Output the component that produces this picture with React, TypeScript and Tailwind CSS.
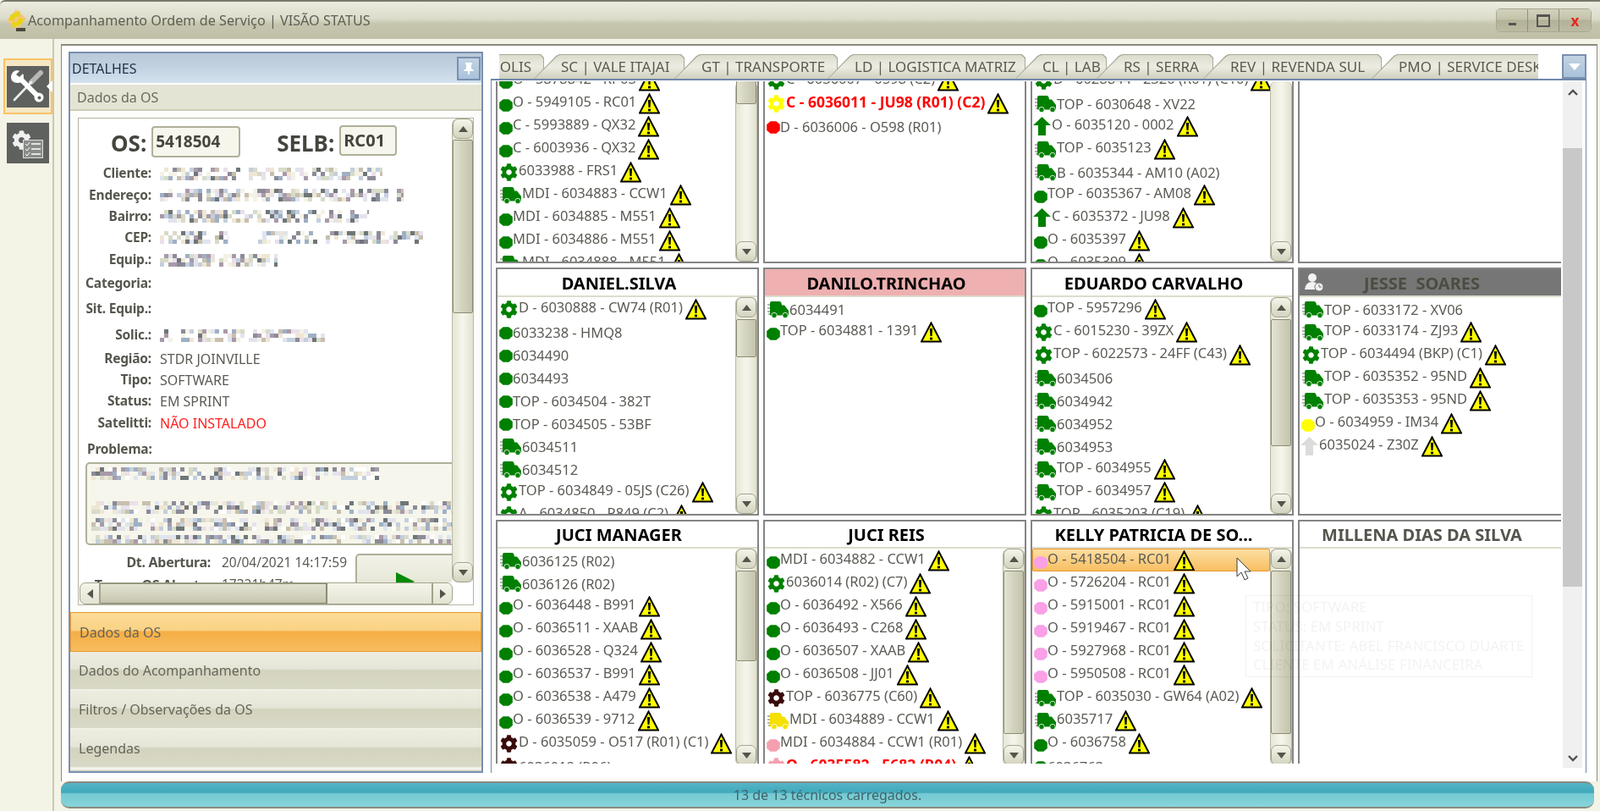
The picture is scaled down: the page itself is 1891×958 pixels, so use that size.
import React from "react";
import { FaCog } from "react-icons/fa";

type Kind = "c" | "g" | "t" | "a";
type Row = { k: Kind; col: string; text: string; w?: boolean; red?: boolean; sel?: boolean };

const G = "#008000";
const DK = "#3a0a0a";
const PK = "#f9a0e6";
const r = (k: Kind, text: string, w = false, col = G, red = false, sel = false): Row => ({ k, col, text, w, red, sel });

function Warn() {
  return (
    <svg width="25" height="25" viewBox="0 0 25 25" className="shrink-0 ml-[3px] mt-[2px]">
      <path d="M12.5 1.5 L24 23.6 L1 23.6 Z" fill="#ffff00" stroke="#000" strokeWidth="2" strokeLinejoin="miter" />
      <path d="M10.9 8 h3.2 l-.6 9 h-2 Z" fill="#000" />
      <rect x="11" y="18.6" width="3" height="2.8" fill="#000" />
    </svg>
  );
}

function Circle({ col }: { col: string }) {
  return (
    <svg width="16" height="15" viewBox="0 0 16 15" className="block">
      <path d="M4.6 0.3 H11.4 L15.8 4 V11 L11.4 14.7 H4.6 L0.2 11 V4 Z" fill={col} />
    </svg>
  );
}

function Truck({ col }: { col: string }) {
  return (
    <svg width="26" height="20" viewBox="0 0 26 20" className="block">
      <path d="M0 4 h4 M0 8 h3 M0 12 h4 M1 15 h3" stroke="#9a9a9a" strokeWidth="1.6" />
      <path d="M3 2 Q3 0 5 0 H14 Q16 0 16.5 2 L17 4.5 H20 L25 11 V16.5 H3 Z" fill={col} />
      <circle cx="8" cy="16.5" r="3.2" fill={col} stroke="#fff" strokeWidth="0.8" />
      <circle cx="21" cy="16.5" r="3.2" fill={col} stroke="#fff" strokeWidth="0.8" />
    </svg>
  );
}

function Arrow({ col }: { col: string }) {
  return (
    <svg width="21" height="22" viewBox="0 0 21 22" className="block">
      <path d="M10.5 0 L21 10 H15 V22 H6 V10 H0 Z" fill={col} />
    </svg>
  );
}

function StatusIcon({ k, col, w }: { k: Kind; col: string; w?: boolean }) {
  if (k === "c")
    return (
      <span className={w ? "shrink-0 w-[16px] ml-[2px] mt-[9px]" : "shrink-0 w-[16px] ml-[2px] mt-[8px]"}>
        <Circle col={col} />
      </span>
    );
  if (k === "g")
    return (
      <span className="shrink-0 w-[22px] ml-[3px] mt-[4px]">
        <FaCog size={21} color={col} />
      </span>
    );
  if (k === "t")
    return (
      <span className="shrink-0 w-[26px] ml-[3px] mt-[5px]">
        <Truck col={col} />
      </span>
    );
  return (
    <span className="shrink-0 w-[22px] ml-[1px] mt-[3px]">
      <Arrow col={col} />
    </span>
  );
}

function ListRow({ row }: { row: Row }) {
  return (
    <div
      className={
        row.sel
          ? "relative flex h-[27px] shrink-0 whitespace-nowrap rounded-[2px] bg-gradient-to-b from-[#fde0a4] to-[#f7bd5e] outline outline-1 outline-[#e8982e] -outline-offset-1"
          : "flex h-[27px] shrink-0 whitespace-nowrap"
      }
    >
      <StatusIcon k={row.k} col={row.col} w={row.w} />
      <span
        className={
          (row.w ? "mt-[3px] " : "mt-[6px] ") +
          (row.red
            ? "text-[17.5px] leading-[18px] font-bold text-[#ff0000]"
            : "text-[16.5px] leading-[18px] text-[#5b5b55]")
        }
      >
        {row.text}
      </span>
      {row.w ? <Warn /> : null}
    </div>
  );
}

function Tri({ down = false }: { down?: boolean }) {
  return (
    <svg width="11" height="7" viewBox="0 0 11 7">
      <path d={down ? "M0 0 H11 L5.5 7 Z" : "M0 7 H11 L5.5 0 Z"} fill="#55554a" />
    </svg>
  );
}

function VBtn({ down = false }: { down?: boolean }) {
  return (
    <div className="flex h-[24px] shrink-0 items-center justify-center rounded-[7px] border border-[#a3a38c] bg-gradient-to-b from-[#f4f4ea] to-[#d4d4c0]">
      <Tri down={down} />
    </div>
  );
}

function VScroll({ top, height, noTop }: { top: number; height: number; noTop?: boolean }) {
  return (
    <div className="flex w-[26px] shrink-0 flex-col rounded-[7px] bg-gradient-to-r from-[#e6e6d6] via-[#f6f6ec] to-[#e2e2d0] border-x border-[#b8b8a2]">
      {noTop ? null : <VBtn />}
      <div className="flex-1 overflow-hidden">
        {height > 0 ? (
          <div
            className="rounded-[2px] border border-[#8c8c74] bg-gradient-to-r from-[#e4e4d4] via-[#d2d2be] to-[#c4c4ae]"
            style={{ marginTop: top, height }}
          />
        ) : null}
      </div>
      <VBtn down />
    </div>
  );
}

type CardProps = {
  title?: string;
  rows: Row[];
  scroll?: { top: number; height: number; noTop?: boolean };
  hh?: number;
  headBg?: string;
  headText?: string;
  offset?: number;
  last?: boolean;
  user?: boolean;
};

function Card({ title, rows, scroll, hh = 33, headBg = "#ffffff", headText = "#000000", offset = 0, last, user }: CardProps) {
  return (
    <div
      className={
        "flex min-h-0 flex-col overflow-hidden border-b-2 border-l-2 border-[#858585] bg-white " +
        (title ? "border-t-2 " : "") +
        (last ? "" : "border-r-2")
      }
    >
      {title ? (
        <div
          className="relative flex shrink-0 items-center justify-center whitespace-pre border-b-2 border-[#dcdccc] pr-[20px] pt-[2px] text-[20px] font-bold"
          style={{ height: hh, background: headBg, color: headText }}
        >
          {user ? (
            <svg width="24" height="24" viewBox="0 0 24 24" className="absolute left-[5px] top-[3px]">
              <circle cx="10" cy="7" r="5" fill="#f2f2f2" />
              <path d="M1 21 Q2 12 10 12 Q14 12 15 14 L13 21 Z" fill="#f2f2f2" />
              <circle cx="18" cy="18" r="5" fill="#f2f2f2" stroke="#767676" />
              <path d="M18 15 V18 H21" stroke="#767676" fill="none" />
            </svg>
          ) : null}
          {title}
        </div>
      ) : null}
      <div className="flex min-h-0 flex-1">
        <div className="min-w-0 flex-1 overflow-hidden">
          <div className="flex flex-col" style={{ marginTop: offset }}>
            {rows.map((x, i) => (
              <ListRow key={i} row={x} />
            ))}
          </div>
        </div>
        {scroll ? <VScroll {...scroll} /> : null}
      </div>
    </div>
  );
}

function rand(seed: number) {
  let s = seed;
  return () => {
    s = (s * 16807) % 2147483647;
    return s / 2147483647;
  };
}
const PAL = ["#dfe5ee", "#c4cfdd", "#9fb0c4", "#efe6d4", "#8b8b98", "#c8bfae", "#f3f2e6", "#a99aa8", "#6f7678", "#e8e0ea", "#ffffff", "#d7dbc8"];

function Mosaic({ w, h, seed }: { w: number; h: number; seed: number }) {
  const rn = rand(seed);
  const cells: React.ReactNode[] = [];
  const cw = 5;
  const ch = 5;
  for (let y = 0; y < h; y += ch) {
    for (let x = 0; x < w; x += cw) {
      if (rn() < 0.28) continue;
      const c = PAL[Math.floor(rn() * PAL.length)];
      cells.push(<rect key={x + "-" + y} x={x} y={y} width={cw} height={ch} fill={c} />);
    }
  }
  return (
    <svg width={w} height={h} viewBox={`0 0 ${w} ${h}`} className="block shrink-0">
      {cells}
    </svg>
  );
}

function Field({ label, h, children }: { label: string; h: string; children?: React.ReactNode }) {
  return (
    <div className={"flex items-center " + h}>
      <span className="w-[86px] shrink-0 text-right text-[15.5px] font-bold tracking-[-0.2px] text-[#56564e]">{label}</span>
      <div className="ml-[10px] flex items-center text-[16px] text-[#5b5b55]">{children}</div>
    </div>
  );
}

function Acc({ text, active }: { text: string; active?: boolean }) {
  return (
    <div
      className={
        active
          ? "flex h-[47px] items-center border border-[#e8982e] bg-[linear-gradient(#fcdc97_0%,#f9d285_45%,#f5ae45_50%,#f7bd5f_100%)] pl-[10px] text-[16px] text-[#66635a]"
          : "flex h-[46px] items-center border-b-2 border-[#f0f0e4] bg-[linear-gradient(#ecece0_0%,#e6e6d8_45%,#d3d3be_50%,#d9d9c7_100%)] pl-[10px] text-[16px] text-[#66665c]"
      }
    >
      {text}
    </div>
  );
}

function Tab({ text, w, first }: { text: string; w: number; first?: boolean }) {
  return (
    <div
      className={(first ? "-ml-[60px] " : "-ml-[12px] ") + "relative h-[29px] shrink-0 bg-[#a9a999] [clip-path:polygon(0_100%,26px_2px,30px_0,calc(100%-4px)_0,100%_4px,100%_100%)]"}
      style={{ width: w }}
    >
      <div
        className={
          (first ? "justify-end pr-[14px] " : "pl-[31px] ") +
          "absolute inset-x-[1px] bottom-0 top-[1px] flex items-center bg-[linear-gradient(#dcdccc,#ecece2_50%,#cfcfbf)] text-[17px] text-[#5a5a50] [clip-path:polygon(0_100%,26px_2px,30px_0,calc(100%-4px)_0,100%_4px,100%_100%)] whitespace-nowrap"
        }
      >
        {text}
      </div>
    </div>
  );
}

const col1a = [
  r("c", "O - 5878842 - RP03", true),
  r("c", "O - 5949105 - RC01", true),
  r("c", "C - 5993889 - QX32", true),
  r("c", "C - 6003936 - QX32", true),
  r("g", "6033988 - FRS1", true),
  r("t", "MDI - 6034883 - CCW1", true),
  r("c", "MDI - 6034885 - M551", true),
  r("c", "MDI - 6034886 - M551", true),
  r("t", "MDI - 6034888 - M551", true),
];
const col2a = [
  r("g", "C - 6036007 - 0598 (C2)", true),
  r("g", "C - 6036011 - JU98 (R01) (C2)", true, "#ffff00", true),
  r("c", "D - 6036006 - O598 (R01)", false, "#ff0000"),
];
const col3a = [
  r("g", "D - 6028844 - 2320 (R01) (C10)", true),
  r("t", "TOP - 6030648 - XV22"),
  r("a", "O - 6035120 - 0002", true),
  r("t", "TOP - 6035123", true),
  r("t", "B - 6035344 - AM10 (A02)"),
  r("c", "TOP - 6035367 - AM08", true),
  r("a", "C - 6035372 - JU98", true),
  r("c", "O - 6035397", true),
  r("c", "O - 6035399", true),
];
const daniel = [
  r("g", "D - 6030888 - CW74 (R01)", true),
  r("c", "6033238 - HMQ8"),
  r("c", "6034490"),
  r("c", "6034493"),
  r("c", "TOP - 6034504 - 382T"),
  r("c", "TOP - 6034505 - 53BF"),
  r("t", "6034511"),
  r("t", "6034512"),
  r("g", "TOP - 6034849 - 05JS (C26)", true),
  r("g", "A - 6034850 - R849 (C2)", true),
];
const danilo = [r("t", "6034491"), r("c", "TOP - 6034881 - 1391", true)];
const eduardo = [
  r("c", "TOP - 5957296", true),
  r("g", "C - 6015230 - 39ZX", true),
  r("g", "TOP - 6022573 - 24FF (C43)", true),
  r("t", "6034506"),
  r("t", "6034942"),
  r("t", "6034952"),
  r("t", "6034953"),
  r("t", "TOP - 6034955", true),
  r("t", "TOP - 6034957", true),
  r("g", "TOP - 6035203 (C19)", true),
];
const jesse = [
  r("t", "TOP - 6033172 - XV06"),
  r("t", "TOP - 6033174 - ZJ93", true),
  r("g", "TOP - 6034494 (BKP) (C1)", true),
  r("t", "TOP - 6035352 - 95ND", true),
  r("t", "TOP - 6035353 - 95ND", true),
  r("c", "O - 6034959 - IM34", true, "#ffff00"),
  r("a", "6035024 - Z30Z", true, "#dcdcdc"),
];
const juciM = [
  r("t", "6036125 (R02)"),
  r("t", "6036126 (R02)"),
  r("c", "O - 6036448 - B991", true),
  r("c", "O - 6036511 - XAAB", true),
  r("c", "O - 6036528 - Q324", true),
  r("c", "O - 6036537 - B991", true),
  r("c", "O - 6036538 - A479", true),
  r("c", "O - 6036539 - 9712", true),
  r("g", "D - 6035059 - O517 (R01) (C1)", true, DK),
  r("g", "6036012 (R06)", false, DK),
];
const juciR = [
  r("c", "MDI - 6034882 - CCW1", true),
  r("g", "6036014 (R02) (C7)", true),
  r("c", "O - 6036492 - X566", true),
  r("c", "O - 6036493 - C268", true),
  r("c", "O - 6036507 - XAAB", true),
  r("c", "O - 6036508 - JJ01", true),
  r("g", "TOP - 6036775 (C60)", true, DK),
  r("t", "MDI - 6034889 - CCW1", true, "#f5e000"),
  r("c", "MDI - 6034884 - CCW1 (R01)", true, "#f5a0b0"),
  r("g", "O - 6035582 - 5682 (R04)", true, "#f5a0b0", true),
];
const kelly = [
  r("c", "O - 5418504 - RC01", true, PK, false, true),
  r("c", "O - 5726204 - RC01", true, PK),
  r("c", "O - 5915001 - RC01", true, PK),
  r("c", "O - 5919467 - RC01", true, PK),
  r("c", "O - 5927968 - RC01", true, PK),
  r("c", "O - 5950508 - RC01", true, PK),
  r("t", "TOP - 6035030 - GW64 (A02)", true),
  r("t", "6035717", true),
  r("c", "O - 6036758", true),
  r("c", "6036763"),
];

function Logo() {
  return (
    <svg width="24" height="27" viewBox="0 0 24 27" className="shrink-0">
      <path d="M12 0 L24 11 L14 23 L1 14 Z" fill="#f6c67a" />
      <path d="M3.5 13 Q3.5 5 12 4 L16.5 1.5 L16.5 9.5 L13 8.5 Q9.5 8.5 9.5 13 Z" fill="#e6d414" />
      <path d="M20.5 11 Q20.5 19 12 20 L7.5 22.5 L7.5 14.5 L11 15.5 Q14.5 15.5 14.5 11 Z" fill="#e6d414" />
      <rect x="12" y="22" width="11" height="4" fill="#4a4a38" />
    </svg>
  );
}

function ToolIcon() {
  return (
    <svg width="50" height="49" viewBox="0 0 50 49" className="block bg-[#5f615f]">
      <path d="M40 8 L29 19" stroke="#b8b8b4" strokeWidth="6" strokeLinecap="round" />
      <path d="M29 19 L9 40" stroke="#eeeeee" strokeWidth="2.6" strokeLinecap="round" />
      <path d="M15 14 L36 35" stroke="#ffffff" strokeWidth="6" />
      <circle cx="38" cy="37" r="5.5" fill="#ffffff" />
      <circle cx="38.5" cy="37.5" r="2" fill="#5f615f" />
      <path d="M13 5 Q6 5 5 13 Q5 20 13 20 Q20 20 20 13 Q20 10 19 9 L15 13 L11 10 L15 6 Z" fill="#ffffff" />
    </svg>
  );
}

function SettingsIcon() {
  return (
    <div className="relative h-[48px] w-[50px] bg-[#5f615f]">
      <span className="absolute left-[6px] top-[9px]">
        <FaCog size={23} color="#f0f0f0" />
      </span>
      <svg width="24" height="22" viewBox="0 0 24 22" className="absolute left-[19px] top-[20px]">
        <rect x="0.5" y="0.5" width="23" height="21" fill="#8a8c88" stroke="#dddddd" />
        <path d="M3 5 l2 2 l3 -4 M3 11 l2 2 l3 -4 M3 17 l2 2 l3 -4" stroke="#fff" fill="none" />
        <path d="M10 5 H21 M10 11 H21 M10 17 H21" stroke="#fff" strokeWidth="1.6" />
      </svg>
    </div>
  );
}

function WinBtn({ children, last }: { children: React.ReactNode; last?: boolean }) {
  return (
    <div className={"flex h-full w-[37px] items-center justify-center bg-[linear-gradient(#d2d1bb,#c4c3aa_45%,#b3b298_50%,#bcbba2)] " + (last ? "" : "border-r border-[#8e8d76]")}>
      {children}
    </div>
  );
}

export default function App() {
  return (
    <div className="relative flex h-[958px] w-[1891px] flex-col overflow-hidden bg-[#f3f3e6] font-['Liberation_Sans',sans-serif] blur-[0.4px]">
      {/* title bar */}
      <div className="flex h-[46px] shrink-0 items-center rounded-tl-[6px] border-t-2 border-[#77776a] bg-[linear-gradient(#ecece0,#dcdccb_45%,#c6c5ad_60%,#bfbea6)] pl-[7px] pr-[10px]">
        <Logo />
        <span className="ml-[2px] text-[16.2px] text-[#5e5e55]">Acompanhamento Ordem de Serviço | VISÃO STATUS</span>
        <div className="ml-auto flex h-[28px] overflow-hidden rounded-[5px] border border-[#a8a790]">
          <WinBtn>
            <span className="mt-[9px] h-[3px] w-[9px] bg-[#555]" />
          </WinBtn>
          <WinBtn>
            <span className="h-[15px] w-[16px] border-2 border-t-[3px] border-[#555]" />
          </WinBtn>
          <WinBtn last>
            <span className="text-[17px] font-bold leading-none text-[#e8241a]">x</span>
          </WinBtn>
        </div>
      </div>

      <div className="flex min-h-0 flex-1">
        {/* ribbon */}
        <div className="flex w-[64px] shrink-0 flex-col items-start border-r-2 border-[#c9c9b4] pl-[4px] pt-[23px]">
          <div className="relative flex h-[66px] w-[58px] items-center justify-start border-2 border-[#fbc266] bg-[#f6e7c4] pl-[2px]">
            <ToolIcon />
            <span className="absolute -right-[2px] top-[24px] h-0 w-0 border-y-[7px] border-r-[7px] border-y-transparent border-r-white" />
          </div>
          <div className="ml-[4px] mt-[10px]">
            <SettingsIcon />
          </div>
        </div>

        {/* content */}
        <div className="ml-[8px] mt-[6px] flex min-w-0 flex-1 flex-col">
          <div className="mr-[3px] flex min-h-0 flex-1 flex-col border-x border-t-2 border-[#8a8a80] bg-white">
            <div className="flex min-h-0 flex-1 pl-[8px] pt-[8px]">
              {/* details */}
              <div className="-mt-[1px] flex h-[852px] w-[490px] shrink-0 flex-col border-2 border-[#7a8fb0] bg-[#fdfdfb]">
                <div className="flex h-[35px] shrink-0 items-center justify-between bg-[linear-gradient(#b9c9d9,#c1d1e0_45%,#d3e2ee)] pl-[2px] pr-[1px] text-[16px] text-[#1f2f4a]">
                  DETALHES
                  <div className="flex h-[28px] w-[28px] items-center justify-center border-2 border-[#7a8fb0] bg-[linear-gradient(#c3d3e3,#a9c2da)]">
                    <svg width="14" height="16" viewBox="0 0 14 16">
                      <path d="M3 1 H11 V3 H10 V8 L13 10 V11 H8 V15 H6 V11 H1 V10 L4 8 V3 H3 Z" fill="#fff" />
                    </svg>
                  </div>
                </div>
                <div className="mt-[2px] flex h-[31px] shrink-0 items-center border-b-2 border-[#cdcdb8] bg-[#e4e4d4] pl-[8px] text-[16px] text-[#6a6a60]">Dados da OS</div>
                <div className="ml-[9px] mt-[8px] flex h-[576px] w-[468px] shrink-0 flex-col border border-[#b4b4a0] bg-white">
                  <div className="flex min-h-0 flex-1">
                    <div className="w-[441px] shrink-0 overflow-hidden">
                      <div className="flex h-[52px] items-start pl-[38px]">
                        <span className="mt-[14px] text-[26px] font-bold leading-[30px] text-[#45453e]">OS:</span>
                        <div className="ml-[6px] mt-[9px] h-[37px] w-[105px] rounded-[4px] border-2 border-[#b0b09a] bg-[#f6f6ec] pl-[3px] text-[19px] font-bold leading-[33px] text-[#45453e]">5418504</div>
                        <span className="ml-[43px] mt-[14px] text-[26px] font-bold leading-[30px] text-[#45453e]">SELB:</span>
                        <div className="ml-[6px] mt-[8px] h-[36px] w-[68px] rounded-[4px] border-2 border-[#b0b09a] bg-[#f6f6ec] pl-[3px] text-[20px] font-bold leading-[32px] text-[#45453e]">RC01</div>
                      </div>
                      <Field label="Cliente:" h="h-[26px]"><Mosaic w={263} h={15} seed={11} /></Field>
                      <Field label="Endereço:" h="h-[25px]"><Mosaic w={288} h={15} seed={23} /></Field>
                      <Field label="Bairro:" h="h-[25px]"><Mosaic w={247} h={15} seed={37} /></Field>
                      <Field label="CEP:" h="h-[25px]">
                        <Mosaic w={81} h={15} seed={41} />
                        <span className="ml-[35px]"><Mosaic w={70} h={15} seed={53} /></span>
                        <span className="ml-[10px]"><Mosaic w={115} h={15} seed={67} /></span>
                      </Field>
                      <Field label="Equip.:" h="h-[28px]"><Mosaic w={139} h={15} seed={71} /></Field>
                      <Field label="Categoria:" h="h-[28px]" />
                      <Field label="Sit. Equip.:" h="h-[32px]" />
                      <Field label="Solic.:" h="h-[30px]"><Mosaic w={195} h={15} seed={83} /></Field>
                      <Field label="Região:" h="h-[25px]">STDR JOINVILLE</Field>
                      <Field label="Tipo:" h="h-[25px]">SOFTWARE</Field>
                      <Field label="Status:" h="h-[26px]">EM SPRINT</Field>
                      <Field label="Satelitti:" h="h-[25px]"><span className="text-[#ff2020]">NÃO INSTALADO</span></Field>
                      <div className="ml-[10px] mt-[6px] flex h-[26px] items-center text-[15.5px] font-bold tracking-[-0.2px] text-[#56564e]">Problema:</div>
                      <div className="ml-[8px] mt-[2px] flex h-[98px] w-[460px] flex-col rounded-[5px] border-2 border-[#b0b09a] bg-[#f6f6ec] pl-[5px] pt-[4px]">
                        <Mosaic w={340} h={15} seed={97} />
                        <div className="mt-[25px]"><Mosaic w={430} h={15} seed={101} /></div>
                        <div className="mt-[5px]"><Mosaic w={430} h={15} seed={113} /></div>
                        <div className="mt-[5px]"><Mosaic w={430} h={10} seed={127} /></div>
                      </div>
                      <div className="flex">
                        <div className="w-[327px] shrink-0">
                          <div className="flex h-[36px] items-end pb-[4px]">
                            <span className="w-[156px] shrink-0 text-right text-[16px] font-bold tracking-[-0.3px] text-[#56564e]">Dt. Abertura:</span>
                            <span className="ml-[13px] text-[15.5px] text-[#5b5b55]">20/04/2021 14:17:59</span>
                          </div>
                          <div className="flex h-[22px] items-center">
                            <span className="w-[156px] shrink-0 text-right text-[16px] font-bold tracking-[-0.3px] text-[#56564e]">Tempo OS Aberta:</span>
                            <span className="ml-[13px] text-[15.5px] text-[#5b5b55]">17321h47m</span>
                          </div>
                        </div>
                        <div className="mt-[10px] flex h-[60px] w-[130px] shrink-0 justify-center rounded-[5px] border-2 border-[#b0b09a] bg-[linear-gradient(#f2f2e8,#dedecc)] pr-[12px] pt-[20px]">
                          <svg width="22" height="22" viewBox="0 0 22 22"><path d="M0 0 L22 11 L0 22 Z" fill="#078a07" /></svg>
                        </div>
                      </div>
                    </div>
                    <VScroll top={1} height={205} />
                  </div>
                  <div className="ml-[1px] flex h-[26px] w-[441px] shrink-0 rounded-[7px] border border-[#a3a38c] bg-[linear-gradient(#f4f4ea,#e4e4d4)]">
                    <div className="flex w-[24px] items-center justify-center border-r-2 border-[#a3a38c]">
                      <svg width="7" height="11" viewBox="0 0 7 11"><path d="M7 0 V11 L0 5.5 Z" fill="#55554a" /></svg>
                    </div>
                    <div className="w-[268px] border-y border-r-2 border-[#8c8c74] bg-[linear-gradient(#e2e2d2,#d2d2be_60%,#c4c4ae)]" />
                    <div className="flex-1" />
                    <div className="flex w-[24px] items-center justify-center border-l-2 border-[#a3a38c]">
                      <svg width="7" height="11" viewBox="0 0 7 11"><path d="M0 0 V11 L7 5.5 Z" fill="#55554a" /></svg>
                    </div>
                  </div>
                </div>
                <div className="mt-[8px] flex flex-col">
                  <Acc text="Dados da OS" active />
                  <Acc text="Dados do Acompanhamento" />
                  <Acc text="Filtros / Observações da OS" />
                  <Acc text="Legendas" />
                </div>
                <div className="mt-[1px] flex-1 bg-[#d9d9c7]" />
              </div>

              {/* right area */}
              <div className="ml-[9px] flex min-w-0 flex-1 flex-col">
                <div className="flex h-[31px] shrink-0 pr-[11px] pl-[10px] pt-[2px]">
                  <div className="flex w-[1228px] shrink-0 overflow-hidden">
                    <Tab text="OLIS" w={113} first />
                    <Tab text="SC | VALE ITAJAI" w={178} />
                    <Tab text="GT | TRANSPORTE" w={193} />
                    <Tab text="LD | LOGISTICA MATRIZ" w={234} />
                    <Tab text="CL | LAB" w={108} />
                    <Tab text="RS | SERRA" w={138} />
                    <Tab text="REV | REVENDA SUL" w={211} />
                    <Tab text="PMO | SERVICE DESK" w={240} />
                  </div>
                  <div className="ml-auto mr-[1px] flex h-[29px] w-[29px] items-center justify-center border-2 border-[#7a8fb0] bg-[linear-gradient(#c3d3e3,#a9c2da)]">
                    <svg width="14" height="8" viewBox="0 0 14 8"><path d="M0 0 H14 L7 8 Z" fill="#fff" /></svg>
                  </div>
                </div>
                <div className="flex h-[820px] w-[1295px] shrink-0 border-x border-t-2 border-[#6f88aa] pl-[5px] pt-[1px]">
                  <div className="grid h-[806px] w-[1259px] shrink-0 grid-cols-[311px_311px_311px_311px] grid-rows-[215px_293px_292px] gap-x-[5px] gap-y-[5px] overflow-hidden">
                    <Card rows={col1a} offset={-15} scroll={{ top: -160, height: 187, noTop: true }} />
                    <Card rows={col2a} offset={-15} />
                    <Card rows={col3a} offset={-15} scroll={{ top: 0, height: 0, noTop: true }} />
                    <Card rows={[]} last />
                    <Card title="DANIEL.SILVA" rows={daniel} scroll={{ top: 2, height: 45 }} />
                    <Card title="DANILO.TRINCHAO" rows={danilo} headBg="#eeb0b0" />
                    <Card title="EDUARDO CARVALHO" rows={eduardo} scroll={{ top: 2, height: 150 }} />
                    <Card title="JESSE  SOARES" rows={jesse} headBg="#767676" headText="#4c4c42" last user />
                    <Card title="JUCI MANAGER" rows={juciM} hh={32} scroll={{ top: 2, height: 107 }} />
                    <Card title="JUCI REIS" rows={juciR} hh={32} scroll={{ top: 2, height: 193 }} />
                    <Card title="KELLY PATRICIA DE SO..." rows={kelly} hh={32} scroll={{ top: 2, height: 193 }} />
                    <Card title="MILLENA DIAS DA SILVA" rows={[]} hh={32} headText="#55554d" last />
                  </div>
                  <div className="ml-[2px] mt-[1px] flex h-[810px] w-[23px] shrink-0 flex-col items-center bg-[#f0f0f0]">
                    <div className="flex h-[23px] shrink-0 items-center justify-center">
                      <svg width="12" height="8" viewBox="0 0 12 8"><path d="M1 7 L6 2 L11 7" stroke="#505050" strokeWidth="2.4" fill="none" /></svg>
                    </div>
                    <div className="mt-[55px] h-[518px] w-full shrink-0 bg-[#c8c8c8]" />
                    <div className="mt-auto flex h-[23px] shrink-0 items-center justify-center">
                      <svg width="12" height="8" viewBox="0 0 12 8"><path d="M1 1 L6 6 L11 1" stroke="#505050" strokeWidth="2.4" fill="none" /></svg>
                    </div>
                  </div>
                </div>
              </div>
            </div>
          </div>
          {/* status bar */}
          <div className="mb-[3px] mr-[7px] flex h-[32px] shrink-0 items-center justify-center rounded-[10px] border-t-2 border-b-2 border-[#8a8a80] bg-[linear-gradient(#55b4c6,#3fa9bc_40%,#74c9d2_45%,#86d5da)] text-[16px] text-[#3f6469]">
            13 de 13 técnicos carregados.
          </div>
        </div>
      </div>

      {/* fading tooltip */}
      <div className="absolute left-[1472px] top-[703px] flex h-[97px] w-[339px] flex-col justify-center whitespace-nowrap border border-[#000]/5 pl-[8px] text-[17px] leading-[22.6px] text-[#000]/5">
        <span>TIPO: SOFTWARE</span>
        <span>STATUS: EM SPRINT</span>
        <span>SOLICITANTE: ABEL FRANCISCO DUARTE</span>
        <span>CLIENTE EM ANÁLISE FINANCEIRA</span>
      </div>
      {/* mouse cursor */}
      <svg width="19" height="29" viewBox="0 0 19 29" className="absolute left-[1461px] top-[658px]">
        <path d="M1 1 V23 L6 18 L10 27 L14 25 L10 17 L17 17 Z" fill="#fff" stroke="#3a3a3a" strokeWidth="1" />
      </svg>
    </div>
  );
}
